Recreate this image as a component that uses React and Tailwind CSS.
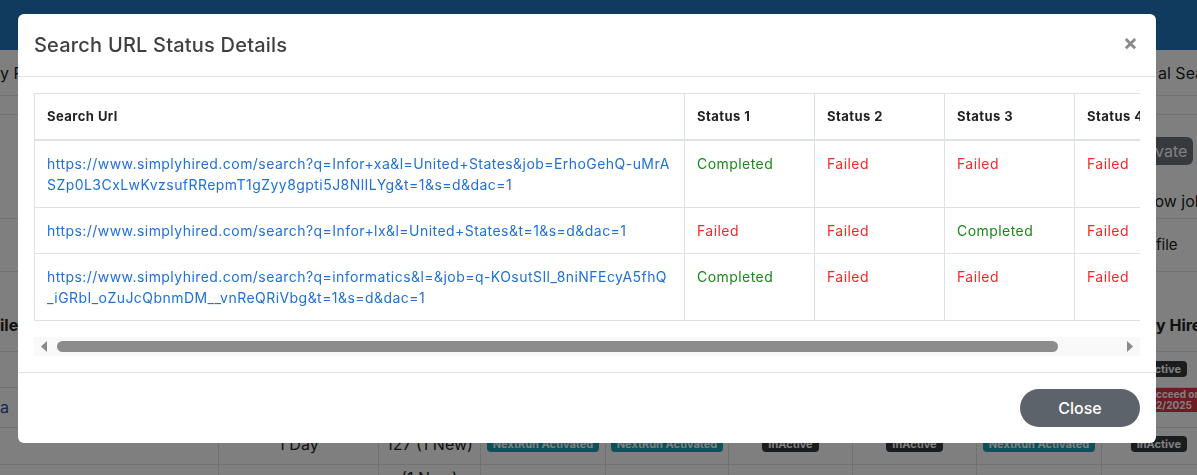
import React from "react";

const FONT = { fontFamily: "Inter, 'Noto Sans', sans-serif" };

const rows = [
  {
    url: [
      "https://www.simplyhired.com/search?q=Infor+xa&l=United+States&job=ErhoGehQ-uMrA",
      "SZp0L3CxLwKvzsufRRepmT1gZyy8gpti5J8NlILYg&t=1&s=d&dac=1",
    ],
    st: ["Completed", "Failed", "Failed", "Failed", "Failed"],
  },
  {
    url: ["https://www.simplyhired.com/search?q=Infor+lx&l=United+States&t=1&s=d&dac=1"],
    st: ["Failed", "Failed", "Completed", "Failed", "Failed"],
  },
  {
    url: [
      "https://www.simplyhired.com/search?q=informatics&l=&job=q-KOsutSIl_8niNFEcyA5fhQ",
      "_iGRbI_oZuJcQbnmDM__vnReQRiVbg&t=1&s=d&dac=1",
    ],
    st: ["Completed", "Failed", "Failed", "Failed", "Completed"],
  },
];

function Status({ v }) {
  return (
    <span className={v === "Completed" ? "text-[#188a18]" : "text-[#f52828]"}>{v}</span>
  );
}

function Badge({ kind, children }) {
  const cls =
    kind === "teal"
      ? "bg-[#17a2b8] text-white"
      : kind === "red"
      ? "bg-[#dc3545] text-white"
      : "bg-[#343a40] text-white";
  return (
    <span className={`inline-block rounded-[4px] px-[6px] py-[1px] text-[11px] font-bold leading-[14px] ${cls}`}>
      {children}
    </span>
  );
}

function Background() {
  const cols = "grid grid-cols-[218px_160px_102px_125px_123px_124px_124px_125px_1fr]";
  return (
    <div className="min-h-[475px] bg-white text-[#222]" style={FONT}>
      <div className="h-[50px] bg-[#2274be]" />
      <div className="flex h-[46px] items-center justify-between border-b border-[#dee2e6] text-[16px]">
        <span className="pl-0">y Profile</span>
        <span className="w-[39px] overflow-hidden whitespace-nowrap">al Search</span>
      </div>
      <div className="h-[19px] border-b border-[#dee2e6]" />
      <div className="flex h-[104px] justify-end border-b border-[#dee2e6]">
        <div className="flex w-[52px] flex-col items-start">
          <span className="mt-[22px] rounded-l-none rounded-r-[6px] bg-[#6c757d] py-[2px] pl-[1px] pr-[6px] text-[16px] text-white">
            tivate
          </span>
          <span className="mt-[24px] whitespace-nowrap text-[16px]">how jobs</span>
        </div>
      </div>
      <div className="flex h-[53px] items-center justify-end border-b border-[#dee2e6]">
        <span className="w-[41px] text-[15px]">file</span>
      </div>
      <div className="flex h-[80px] items-end justify-between border-b border-[#dee2e6] pb-[14px] text-[16px] font-bold">
        <span>iles</span>
        <span className="w-[41px] overflow-hidden whitespace-nowrap">y Hired</span>
      </div>
      <div className="flex h-[36px] items-start justify-end border-b border-[#dee2e6] pr-[10px] pt-[9px]">
        <Badge kind="dark">InActive</Badge>
      </div>
      <div className="flex h-[40px] items-start justify-between border-b border-[#dee2e6]">
        <span className="mt-[7px] text-[16px] text-[#1f4fa8]">a</span>
        <span className="flex w-[41px] flex-col overflow-hidden whitespace-nowrap bg-[#dc3545] py-[1px] text-[10px] font-bold leading-[11px] text-white">
          <span>cceed on</span>
          <span>2/2025</span>
        </span>
      </div>
      <div className={`${cols} h-[37px] border-b border-[#dee2e6] text-[16px]`}>
        <div />
        <div className="flex items-start justify-center border-l border-[#dee2e6] pt-[4px]">1 Day</div>
        <div className="flex items-start justify-center border-l border-[#dee2e6] pt-[4px]">127 (1 New)</div>
        <div className="flex items-start justify-center border-l border-[#dee2e6] pt-[8px]"><Badge kind="teal">NextRun Activated</Badge></div>
        <div className="flex items-start justify-center border-l border-[#dee2e6] pt-[8px]"><Badge kind="teal">NextRun Activated</Badge></div>
        <div className="flex items-start justify-center border-l border-[#dee2e6] pt-[8px]"><Badge kind="dark">InActive</Badge></div>
        <div className="flex items-start justify-center border-l border-[#dee2e6] pt-[8px]"><Badge kind="dark">InActive</Badge></div>
        <div className="flex items-start justify-center border-l border-[#dee2e6] pt-[8px]"><Badge kind="teal">NextRun Activated</Badge></div>
        <div className="flex items-start justify-end border-l border-[#dee2e6] pr-[10px] pt-[8px]"><Badge kind="dark">InActive</Badge></div>
      </div>
      <div className={`${cols} h-[40px] text-[16px]`}>
        <div />
        <div className="border-l border-[#dee2e6]" />
        <div className="flex justify-center border-l border-[#dee2e6] pt-[1px]">(1 New)</div>
        <div className="border-l border-[#dee2e6]" />
        <div className="border-l border-[#dee2e6]" />
        <div className="border-l border-[#dee2e6]" />
        <div className="border-l border-[#dee2e6]" />
        <div className="border-l border-[#dee2e6]" />
        <div className="border-l border-[#dee2e6]" />
      </div>
    </div>
  );
}

function Modal() {
  return (
    <div className="fixed inset-0 bg-black/50" style={FONT}>
      <div className="absolute left-[18px] top-[14px] w-[1138px] overflow-hidden rounded-[6px] bg-white">
        <div className="flex h-[63px] items-center justify-between border-b border-[#dee2e6] px-[16px]">
          <h2 className="text-[20px] font-medium tracking-[0.2px] text-[#404040]">Search URL Status Details</h2>
          <span className="mr-[2px] mt-[-6px] text-[22px] font-bold leading-none text-[#8a8a8a]">×</span>
        </div>
        <div className="p-[16px]">
          <div className="w-full overflow-hidden">
            <table className="mb-[16px] w-[1300px] table-fixed border-collapse text-[14px] leading-[21px] tracking-[0.45px]">
              <colgroup>
                <col className="w-[650px]" />
                <col className="w-[130px]" />
                <col className="w-[130px]" />
                <col className="w-[130px]" />
                <col className="w-[130px]" />
                <col className="w-[130px]" />
              </colgroup>
              <thead>
                <tr className="border-b-2 border-[#dee2e6]">
                  {["Search Url", "Status 1", "Status 2", "Status 3", "Status 4", "Status 5"].map((h) => (
                    <th
                      key={h}
                      className="border border-b-2 border-[#dee2e6] px-[12px] py-[12px] text-left text-[13px] font-bold text-[#222]"
                    >
                      {h}
                    </th>
                  ))}
                </tr>
              </thead>
              <tbody>
                {rows.map((r, i) => (
                  <tr key={i}>
                    <td className="border border-[#dee2e6] px-[12px] py-[12px] align-top text-[#1f70d8]">
                      {r.url.map((l, j) => (
                        <div key={j} className="whitespace-nowrap">{l}</div>
                      ))}
                    </td>
                    {r.st.map((s, j) => (
                      <td key={j} className="border border-[#dee2e6] px-[12px] py-[12px] align-top">
                        <Status v={s} />
                      </td>
                    ))}
                  </tr>
                ))}
              </tbody>
            </table>
          </div>
          <div className="flex h-[19px] items-center bg-[#f9f9f9] px-[7px]">
            <svg width="7" height="11" viewBox="0 0 7 11" className="shrink-0">
              <path d="M6 0 L0 5.5 L6 11 Z" fill="#8a8a8a" />
            </svg>
            <div className="ml-[9px] mr-[68px] h-[11px] flex-1 rounded-full bg-[#8c8c8c]" />
            <svg width="7" height="11" viewBox="0 0 7 11" className="shrink-0">
              <path d="M1 0 L7 5.5 L1 11 Z" fill="#8a8a8a" />
            </svg>
          </div>
        </div>
        <div className="flex justify-end border-t border-[#dee2e6] px-[16px] py-[16px]">
          <button className="h-[38px] w-[120px] rounded-full bg-[#5c636a] text-[16px] font-medium text-white">
            Close
          </button>
        </div>
      </div>
    </div>
  );
}

export default function App() {
  return (
    <div className="relative h-[475px] w-[1197px] overflow-hidden">
      <Background />
      <Modal />
    </div>
  );
}
